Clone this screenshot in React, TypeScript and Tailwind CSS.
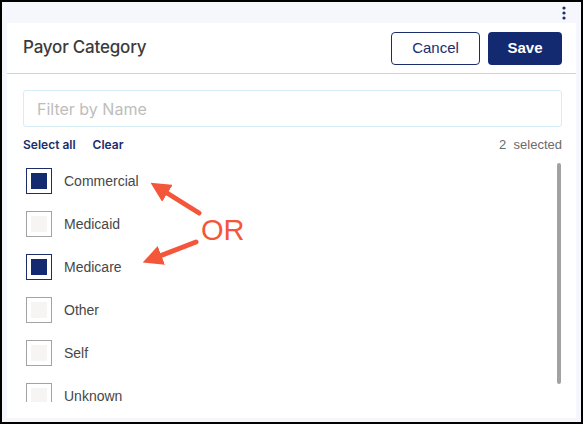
import { useState } from 'react';

const items = [
  { name: 'Commercial', checked: true },
  { name: 'Medicaid', checked: false },
  { name: 'Medicare', checked: true },
  { name: 'Other', checked: false },
  { name: 'Self', checked: false },
  { name: 'Unknown', checked: false },
];

export default function App() {
  const [list] = useState(items);
  const count = list.filter((i) => i.checked).length;

  return (
    <div
      className="w-[583px] h-[424px] border-2 border-black bg-[#f6f7fc] flex flex-col overflow-hidden"
      style={{ fontFamily: 'Inter, "Noto Sans", sans-serif' }}
    >
      {/* top strip with kebab */}
      <div className="h-[21px] flex justify-end items-center pr-[15px]">
        <svg width="4" height="14" viewBox="0 0 4 14">
          <circle cx="2" cy="2" r="1.6" fill="#1b2d6b" />
          <circle cx="2" cy="7" r="1.6" fill="#1b2d6b" />
          <circle cx="2" cy="12" r="1.6" fill="#1b2d6b" />
        </svg>
      </div>

      <div className="relative mx-[5px] mb-[4px] flex-1 bg-white flex flex-col min-h-0">
        {/* header */}
        <div className="h-[51px] flex items-center justify-between pl-[16px] pr-[14px] border-b border-[#d4d4d4]">
          <h1 className="text-[17px] font-medium text-[#3b3b3b] tracking-[-0.2px]">Payor Category</h1>
          <div className="flex gap-2">
            <button className="w-[89px] h-[33px] rounded-[4px] border border-[#1b2d6b] text-[#1b2d6b] text-[15px]" style={{ fontFamily: '"Liberation Sans", Arial, sans-serif' }}>
              Cancel
            </button>
            <button className="w-[74px] h-[33px] rounded-[4px] bg-[#132a70] text-white text-[15px] font-bold" style={{ fontFamily: '"Liberation Sans", Arial, sans-serif' }}>
              Save
            </button>
          </div>
        </div>

        {/* body */}
        <div className="pl-[16px] pr-[14px] pt-[16px] flex flex-col flex-1 min-h-0">
          <div className="h-[37px] border border-[#d5eef5] rounded-[3px] flex items-center px-[13px] text-[16px] text-[#bdbdbd]">
            Filter by Name
          </div>
          <div className="flex justify-between items-center h-[36px] text-[12px]">
            <div className="flex gap-[17px] font-semibold text-[#1b2d6b]">
              <span>Select all</span>
              <span>Clear</span>
            </div>
            <span className="text-[13px] text-[#6b6b6b]" style={{ fontFamily: '"Liberation Sans", Arial, sans-serif' }}>
              {count}&nbsp;&nbsp;selected
            </span>
          </div>

          <div className="flex flex-1 min-h-0 overflow-hidden">
            <div className="flex-1 flex flex-col pl-[3px] pt-[5px] gap-[17px] overflow-hidden h-[239px]">
              {list.map((item) => (
                <div key={item.name} className="flex items-center gap-[12px] shrink-0">
                  {item.checked ? (
                    <div className="w-[26px] h-[26px] border border-[#1b2d6b] flex items-center justify-center">
                      <div className="w-[16px] h-[16px] bg-[#132a70]" />
                    </div>
                  ) : (
                    <div className="w-[26px] h-[26px] border border-[#a3a3a3] flex items-center justify-center">
                      <div className="w-[16px] h-[16px] bg-[#f6f5f3]" />
                    </div>
                  )}
                  <span className="text-[14px] text-[#474747]" style={{ fontFamily: '"Liberation Sans", Arial, sans-serif' }}>{item.name}</span>
                </div>
              ))}
            </div>
            <div className="w-[5px] pb-[18px] mr-[0px]">
              <div className="w-[4px] h-[221px] rounded-full bg-[#a2a2a2]" />
            </div>
          </div>
        </div>

        {/* annotation */}
        <svg className="absolute left-0 top-0 pointer-events-none" width="571" height="400">
          <defs>
            <marker id="ah" markerWidth="4" markerHeight="4" refX="2" refY="2" orient="auto">
              <path d="M0,0 L4,2 L0,4 Z" fill="#f4563a" />
            </marker>
          </defs>
          <line x1="192" y1="190" x2="152" y2="165" stroke="#f4563a" strokeWidth="5" strokeLinecap="round" markerEnd="url(#ah)" />
          <line x1="189" y1="219" x2="145" y2="236" stroke="#f4563a" strokeWidth="5" strokeLinecap="round" markerEnd="url(#ah)" />
          <text x="194" y="217" fill="#f4563a" fontSize="29" style={{ fontFamily: '"Liberation Sans", Arial, sans-serif' }}>OR</text>
        </svg>
      </div>
    </div>
  );
}
